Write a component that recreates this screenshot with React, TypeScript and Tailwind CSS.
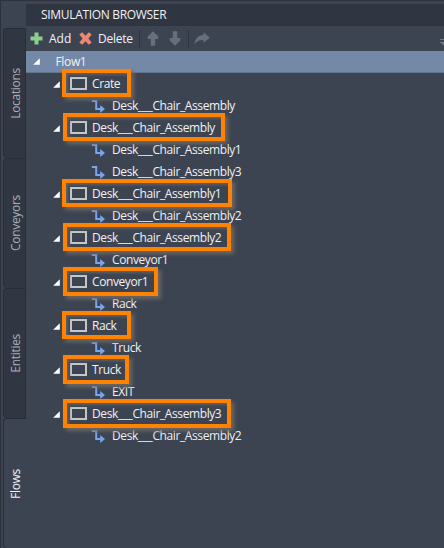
type FlowNode = {
  label: string;
  mark: string;
  targets: string[];
};

const nodes: FlowNode[] = [
  { label: "Crate", mark: "left-[36px] w-[69px] h-[28px]", targets: ["Desk___Chair_Assembly"] },
  {
    label: "Desk___Chair_Assembly",
    mark: "left-[37px] w-[162px] h-[28px]",
    targets: ["Desk___Chair_Assembly1", "Desk___Chair_Assembly3"],
  },
  { label: "Desk___Chair_Assembly1", mark: "left-[36px] w-[170px] h-[28px]", targets: ["Desk___Chair_Assembly2"] },
  { label: "Desk___Chair_Assembly2", mark: "left-[37px] w-[168px] h-[28px]", targets: ["Conveyor1"] },
  { label: "Conveyor1", mark: "left-[37px] w-[95px] h-[29px]", targets: ["Rack"] },
  { label: "Rack", mark: "left-[36px] w-[69px] h-[28px]", targets: ["Truck"] },
  { label: "Truck", mark: "left-[37px] w-[66px] h-[29px]", targets: ["EXIT"] },
  { label: "Desk___Chair_Assembly3", mark: "left-[37px] w-[168px] h-[29px]", targets: ["Desk___Chair_Assembly2"] },
];

const tabs = ["Locations", "Conveyors", "Entities", "Flows"];

function Expander() {
  return (
    <svg className="h-[7px] w-[7px] shrink-0" viewBox="0 0 7 7">
      <path d="M6.8 0.2V6.8H0.2Z" fill="#fff" />
    </svg>
  );
}

function FlowArrow() {
  return (
    <svg className="h-[15px] w-[15px] shrink-0" viewBox="0 0 15 15" fill="none">
      <path d="M0.8 2H5.2V10H10" stroke="#78a5ec" strokeWidth="2" />
      <path d="M9.2 6L14 10L9.2 14Z" fill="#78a5ec" />
    </svg>
  );
}

function MoveArrow({ down = false }: { down?: boolean }) {
  return (
    <svg className={down ? "h-[15px] w-[12px] rotate-180" : "h-[15px] w-[12px]"} viewBox="0 0 12 15">
      <path d="M6 0.3L11.3 5.6V8H8.2V14.7H3.8V8H0.7V5.6Z" fill="#686f7a" />
    </svg>
  );
}

function Toolbar() {
  return (
    <div className="flex h-[25px] items-center pl-1 text-[12px]">
      <svg className="h-[13px] w-[13px]" viewBox="0 0 13 13">
        <path d="M4.5 0.5H8.5V4.5H12.5V8.5H8.5V12.5H4.5V8.5H0.5V4.5H4.5Z" fill="#8dcf8a" />
      </svg>
      <span className="ml-[6px] w-[30px]">Add</span>
      <svg className="h-[13px] w-[13px]" viewBox="0 0 13 13">
        <path d="M3.2 0.3L6.5 3.8L9.8 0.3L12.7 2.4L9.4 6.5L12.7 10.6L9.8 12.7L6.5 9.2L3.2 12.7L0.3 10.6L3.6 6.5L0.3 2.4Z" fill="#f18672" />
      </svg>
      <span className="ml-[6px] w-[41px] tracking-[-0.25px]">Delete</span>
      <div className="h-[18px] w-px bg-[#2e3440]" />
      <div className="ml-[7px] flex gap-[10px]">
        <MoveArrow />
        <MoveArrow down />
      </div>
      <div className="ml-[7px] h-[18px] w-px bg-[#2e3440]" />
      <svg className="ml-[5px] h-[13px] w-[16px]" viewBox="0 0 16 13">
        <path d="M9.5 0.3L15.8 5.8L9.5 10.8V7.9C5.2 7.7 2.5 9 0.3 12.5C0.8 7 4 3.3 9.5 3Z" fill="#686f7a" />
      </svg>
      <svg className="ml-auto mt-[7px] h-[6px] w-[4px]" viewBox="0 0 4 6">
        <path d="M0 .5H4M0 3.5H4M1.5 4.5H4M2.5 5.5H4" stroke="#707782" />
      </svg>
    </div>
  );
}

export default function App() {
  return (
    <div className="flex h-[548px] w-[444px] flex-col overflow-hidden border-t border-[#2d3440] bg-[#3c4452] font-['Open_Sans','Noto_Sans',sans-serif] text-[#f1f2f4]">
      <div className="flex min-h-0 flex-1">
        <div className="flex w-[26px] shrink-0 flex-col border-l border-[#2b303b] pl-[2px] pt-[27px]">
          {tabs.map((tab) => (
            <div
              key={tab}
              className={
                tab === "Flows"
                  ? "flex h-[130px] shrink-0 items-center justify-center rounded-l-[4px] border-l border-t border-[#282d37] pl-[2px] text-[12px] tracking-[-0.3px]"
                  : "flex h-[130px] shrink-0 items-center justify-center rounded-l-[4px] border-l border-t border-r border-[#282d37] bg-[#303642] pl-[3px] text-[12px] tracking-[-0.3px] text-[#a9aeb6]"
              }
            >
              <span className="rotate-180 [writing-mode:vertical-rl]">{tab}</span>
            </div>
          ))}
        </div>
        <div className="flex min-w-0 flex-1 flex-col">
          <div className="mt-[3px] flex h-[22px] items-center bg-[#2f3541] pl-[15px] text-[12px]">
            <span className="tracking-[-0.32px]">SIMULATION BROWSER</span>
          </div>
          <Toolbar />
          <div className="flex h-[22px] items-center border-b border-[#66758f] bg-[#7488a8] pl-[7px] text-[12px]">
            <Expander />
            <span className="ml-[15.5px] tracking-[-0.35px]">Flow1</span>
          </div>
          <div className="text-[12px] leading-[22px] tracking-[-0.4px]">
            {nodes.map((node) => (
              <div key={node.label}>
                <div className="relative flex h-[22px] items-center pl-[27px]">
                  <Expander />
                  <div className="mb-px ml-[10px] h-[13px] w-[17px] border-2 border-[#c5c6c7]" />
                  <span className="ml-[5px] whitespace-nowrap">{node.label}</span>
                  <div
                    className={`absolute top-[-4px] z-10 border-4 border-[#ff8200] shadow-[3px_3px_4px_#6a6865,inset_2px_2px_3px_#5e6065] ${node.mark}`}
                  />
                </div>
                {node.targets.map((target) => (
                  <div key={target} className="flex h-[22px] items-center pl-[65px]">
                    <FlowArrow />
                    <span className="ml-[6px] whitespace-nowrap">{target}</span>
                  </div>
                ))}
              </div>
            ))}
          </div>
        </div>
      </div>
    </div>
  );
}
